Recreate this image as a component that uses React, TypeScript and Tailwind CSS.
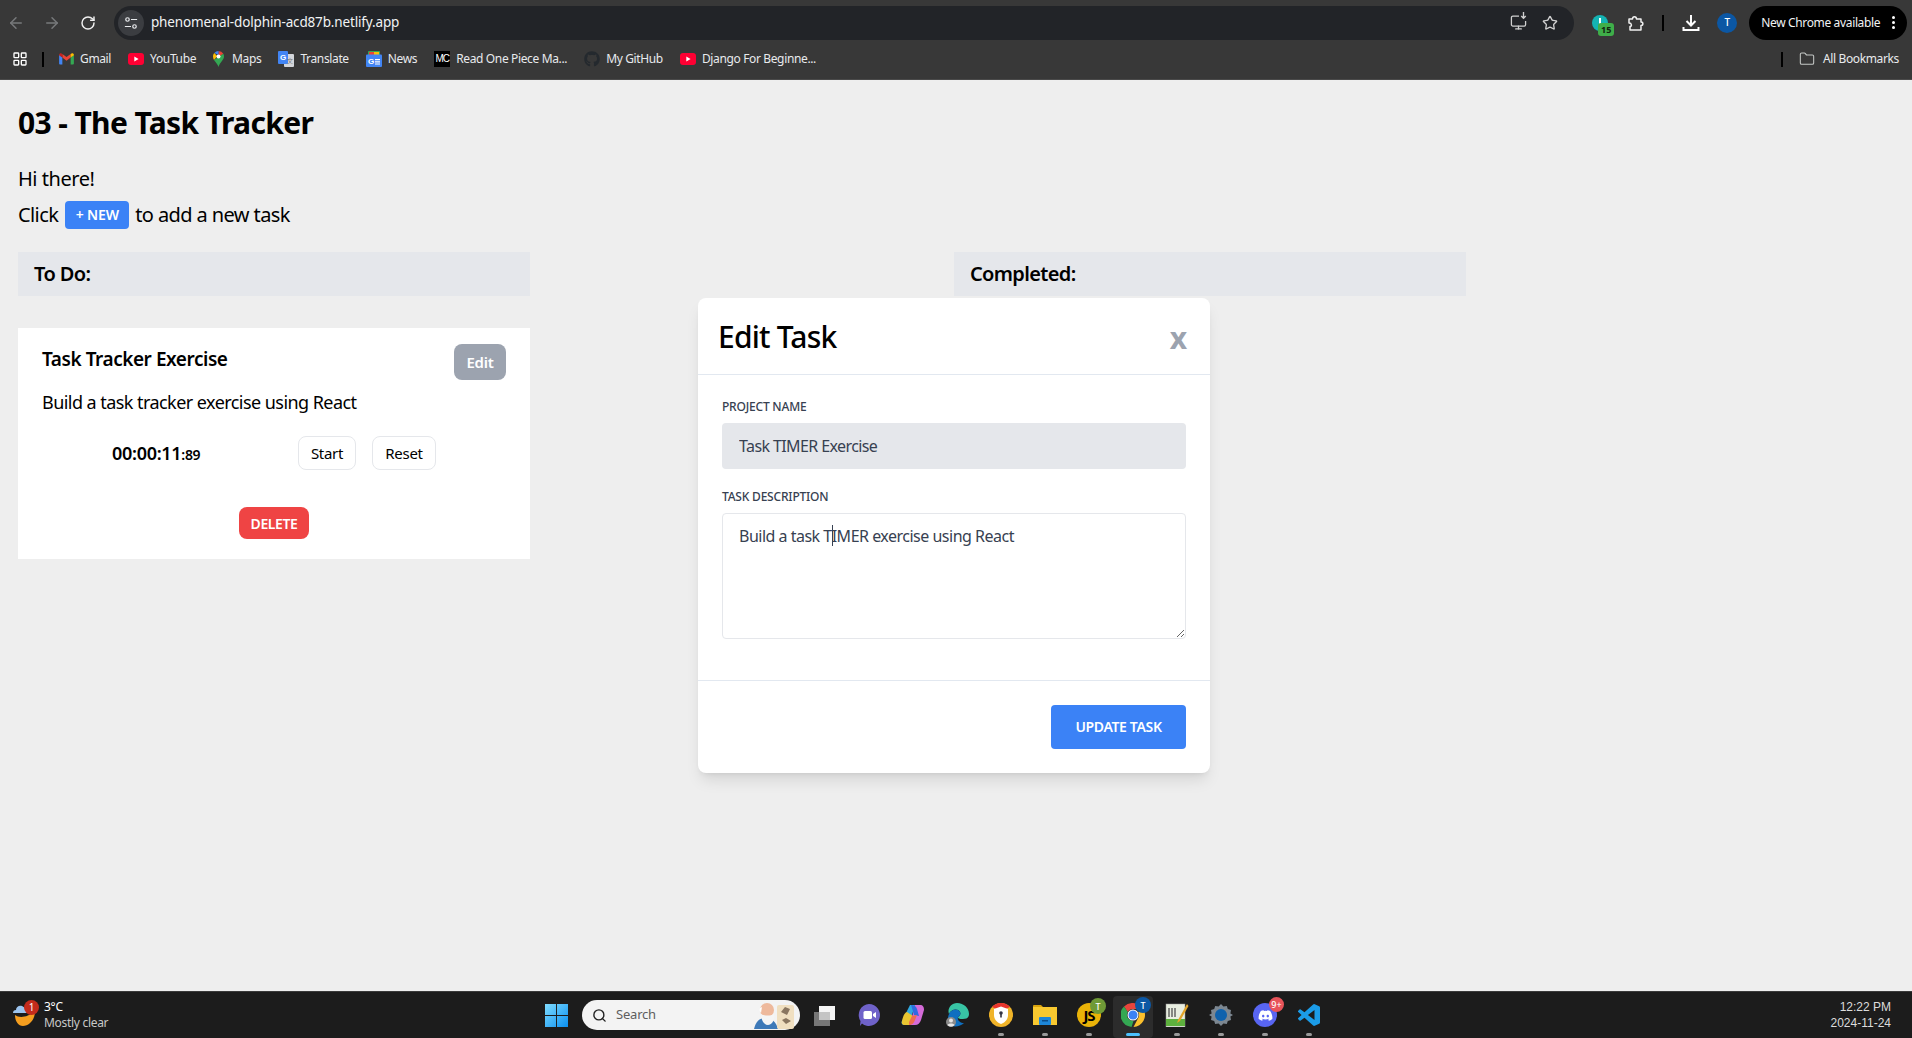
import { ArrowLeft, ArrowRight, RotateCw, Star, LayoutGrid, Folder, Search, Monitor } from "lucide-react";
import { FaGithub, FaDiscord } from "react-icons/fa";
import type { ReactNode } from "react";

const YT = () => (
  <svg viewBox="0 0 16 12" className="w-4 h-3">
    <rect width="16" height="12" rx="3" fill="#ff0033" />
    <path d="M6.3 3.6 10.6 6 6.3 8.4z" fill="#fff" />
  </svg>
);
const Gmail = () => (
  <svg viewBox="0 0 16 13" className="w-[15px] h-3">
    <path d="M0 2v9.5A1 1 0 0 0 1 12.5h2.5V5z" fill="#4285f4" />
    <path d="M16 2v9.5a1 1 0 0 1-1 1h-2.5V5z" fill="#34a853" />
    <path d="M3.5 5 8 8.4 12.5 5V1L8 4.4 3.5 1z" fill="#ea4335" />
    <path d="M0 2c0-1.6 2-2.2 3.5-1V5L0 2.4z" fill="#c5221f" />
    <path d="M16 2c0-1.6-2-2.2-3.5-1V5L16 2.4z" fill="#fbbc04" />
  </svg>
);
const MapsPin = () => (
  <svg viewBox="0 0 11 16" className="w-[11px] h-4">
    <path d="M5.5 0a5.5 5.5 0 0 1 4.8 2.8L5.5 6z" fill="#ea4335" />
    <path d="M1.3 2A5.5 5.5 0 0 1 5.5 0v4z" fill="#4285f4" />
    <path d="M0 5.5c0-1.4.5-2.6 1.3-3.5l3 3.2L1 9C.4 7.9 0 6.8 0 5.5z" fill="#fbbc04" />
    <path d="M10.3 2.8c.5.8.7 1.7.7 2.7 0 3.5-4 5.5-5.5 10.5C4.8 13.200 2.300 11 1 9z" fill="#34a853" />
    <circle cx="5.500" cy="5.500" r="2" fill="#fff" />
  </svg>
);
const Translate = () => (
  <svg viewBox="0 0 16 16" className="w-4 h-4">
    <rect x="6" y="3" width="10" height="13" rx="1" fill="#d4d6da" />
    <rect x="0" y="0" width="10" height="13" rx="1" fill="#4285f4" />
    <text x="5" y="9" fontSize="8" textAnchor="middle" fill="#fff" fontFamily="Liberation Sans, sans-serif" fontWeight="700">G</text>
    <text x="12" y="12" fontSize="6" textAnchor="middle" fill="#777" fontFamily="Noto Sans CJK SC, sans-serif">文</text>
  </svg>
);
const News = () => (
  <svg viewBox="0 0 16 16" className="w-4 h-4">
    <rect x="2" y="0" width="12" height="6" rx="1" fill="#34a853" />
    <rect x="3" y="1" width="5" height="3" fill="#ea4335" />
    <rect x="8" y="1" width="5" height="3" fill="#fbbc04" />
    <rect x="0" y="3.500" width="16" height="12.500" rx="1" fill="#4285f4" />
    <text x="5" y="13" fontSize="8" textAnchor="middle" fill="#fff" fontFamily="Liberation Sans, sans-serif" fontWeight="700">G</text>
    <path d="M9 8h5v1.200H9zM9 10.200h5v1.200H9zM9 12.400h5v1.200H9z" fill="#fff" />
  </svg>
);
const MC = () => (
  <div className="w-4 h-4 bg-black flex items-center justify-center text-white text-[10px] leading-none tracking-[-1px] font-['Liberation_Sans',sans-serif]">MC</div>
);

function Bookmark({ icon, label, gap }: { icon: ReactNode; label: string; gap: string }) {
  return (
    <div className={`flex items-center ${gap}`}>
      {icon}
      <span className="text-[12px] leading-4 text-[#e8eaed] whitespace-nowrap tracking-[-0.36px]">{label}</span>
    </div>
  );
}

const Badge = ({ text, color, cls }: { text: string; color: string; cls: string }) => (
  <div className={`absolute rounded-full flex items-center justify-center text-white font-medium leading-none ${cls}`} style={{ background: color }}>{text}</div>
);

function TaskIcon({ children, dot, active }: { children: ReactNode; dot?: boolean; active?: boolean }) {
  return (
    <div className={`relative w-[44px] h-[47px] flex items-center justify-center shrink-0`}>
      {active && <div className="absolute left-[2px] right-[2px] top-[4px] bottom-[1px] bg-[#2c2c2c] rounded-[4px]" />}
      <div className="relative w-6 h-6 flex items-center justify-center">{children}</div>
      {dot && <div className="absolute left-[19px] bottom-[3px] w-[6px] h-[3px] rounded-full bg-[#9a9a9a]" />}
      {active && <div className="absolute left-[15px] bottom-[3px] w-[14px] h-[3px] rounded-full bg-[#4cc2ff]" />}
    </div>
  );
}

export default function App() {
  return (
    <div className="h-screen w-full flex flex-col overflow-hidden bg-[#eeeeee] font-['Noto_Sans',sans-serif] text-black">
      {/* Browser toolbar */}
      <header className="h-[80px] shrink-0 bg-[#383838] border-b border-[#4a4a4a]">
        <div className="h-[44px] flex items-center pl-[6px] pr-[5px] pt-[1px]">
          <ArrowLeft className="w-[18px] h-[18px] text-[#77797b] ml-[1px]" strokeWidth={2} />
          <ArrowRight className="w-[18px] h-[18px] text-[#77797b] ml-[18px]" strokeWidth={2} />
          <RotateCw className="w-4 h-4 text-[#f0f0f0] ml-[19px]" strokeWidth={2.2} />
          <div className="ml-[18px] w-[1462px] h-[34px] rounded-full bg-[#222428] flex items-center pl-[4px]">
            <div className="w-[26px] h-[26px] rounded-full bg-[#3b3d41] flex items-center justify-center">
              <svg viewBox="0 0 16 16" className="w-[14px] h-[14px]" fill="none" stroke="#e8eaed" strokeWidth="1.400">
                <circle cx="4" cy="4" r="2" />
                <path d="M8 4h7M1 12h7" />
                <circle cx="12" cy="12" r="2" />
              </svg>
            </div>
            <span className="ml-[7px] text-[13.5px] text-[#f1f3f4] tracking-[-0.15px]">phenomenal-dolphin-acd87b.netlify.app</span>
            <div className="ml-auto flex items-center gap-[15px] mr-[16px]">
              <div className="relative w-[17px] h-[17px] flex items-center justify-center">
                <Monitor className="w-[17px] h-[17px] text-[#d0d0d0]" strokeWidth={1.800} />
                <div className="absolute -right-[1px] -top-[2px] w-[9px] h-[9px] bg-[#222428] flex items-center justify-center">
                  <svg viewBox="0 0 10 10" className="w-[9px] h-[9px]" fill="none" stroke="#d0d0d0" strokeWidth="1.500"><path d="M5 0v7M2.500 4.500 5 7l2.500-2.500" /></svg>
                </div>
              </div>
              <Star className="w-4 h-4 text-[#d0d0d0]" strokeWidth={2} />
            </div>
          </div>
          <div className="relative ml-[18px] w-[16px] h-[16px] rounded-full bg-[#14b3b3] flex items-center justify-center">
            <div className="w-[2px] h-[6px] bg-white mb-[3px]" />
            <div className="absolute left-[6px] top-[8px] w-[16px] h-[13px] rounded-[3px] bg-[#3fae49] text-[#10240f] text-[9px] font-bold leading-[13px] text-center">15</div>
          </div>
          <svg viewBox="0 0 16 16" className="ml-[20px] w-[16px] h-[16px]" fill="none" stroke="#f0f0f0" strokeWidth="1.500" strokeLinejoin="round">
            <path d="M1 4h3.500c0-3 4-3 4 0H13v3c2.500 0 2.500 3.500 0 3.500V15H2v-3.500c2 0 2-3.500-1-3.500z" />
          </svg>
          <div className="ml-[18px] w-[2px] h-[16px] bg-black" />
          <svg viewBox="0 0 18 18" className="ml-[18px] w-[18px] h-[18px]" fill="none" stroke="#ffffff" strokeWidth="2">
            <path d="M9 1v10M4.500 7 9 11.500 13.500 7M1.500 13v3h15v-3" />
          </svg>
          <div className="ml-[17px] w-5 h-5 rounded-full bg-[#0b57a4] text-white text-[10px] font-medium flex items-center justify-center">T</div>
          <div className="ml-[12px] w-[158px] h-[34px] rounded-full bg-black flex items-center pl-[12px] pr-[12px] justify-between">
            <span className="text-[12px] text-[#f1f3f4] whitespace-nowrap tracking-[-0.35px]">New Chrome available</span>
            <div className="flex flex-col gap-[2px]">
              <div className="w-[3px] h-[3px] rounded-full bg-white" />
              <div className="w-[3px] h-[3px] rounded-full bg-white" />
              <div className="w-[3px] h-[3px] rounded-full bg-white" />
            </div>
          </div>
        </div>
        <div className="h-[30px] flex items-center pl-[12px] pr-[13px]">
          <LayoutGrid className="w-4 h-4 text-white" strokeWidth={2} />
          <div className="ml-[14px] w-[2px] h-[15px] bg-black" />
          <div className="ml-[15px] flex items-center gap-[17px]">
            <Bookmark icon={<Gmail />} label="Gmail" gap="gap-[6px]" />
            <Bookmark icon={<YT />} label="YouTube" gap="gap-[6px]" />
            <Bookmark icon={<MapsPin />} label="Maps" gap="gap-[8px]" />
            <Bookmark icon={<Translate />} label="Translate" gap="gap-[6px]" />
            <Bookmark icon={<News />} label="News" gap="gap-[6px]" />
            <Bookmark icon={<MC />} label="Read One Piece Ma..." gap="gap-[6px]" />
            <Bookmark icon={<FaGithub className="w-4 h-4 text-[#24292e]" />} label="My GitHub" gap="gap-[6px]" />
            <Bookmark icon={<YT />} label="Django For Beginne..." gap="gap-[6px]" />
          </div>
          <div className="ml-auto w-[2px] h-[15px] bg-black" />
          <div className="ml-[16px] flex items-center gap-[8px]">
            <Folder className="w-4 h-4 text-[#c4c7c5]" strokeWidth={1.600} />
            <span className="text-[12px] text-[#e8eaed] whitespace-nowrap tracking-[-0.36px]">All Bookmarks</span>
          </div>
        </div>
      </header>

      {/* Page */}
      <main className="relative flex-1 pl-[18px] pt-[23px]">
        <h1 className="text-[30px] leading-10 font-bold tracking-[-0.62px]">03 - The Task Tracker</h1>
        <p className="mt-[22px] text-[20px] leading-7 tracking-[-0.45px]">Hi there!</p>
        <div className="mt-[8px] flex items-center text-[20px] leading-7 tracking-[-0.6px]">
          <span>Click</span>
          <span className="ml-[7px] w-[64px] h-[28px] rounded bg-[#3b82f6] text-white text-[14px] font-semibold flex items-center justify-center tracking-[-0.15px]">+ NEW</span>
          <span className="ml-[6px]">to add a new task</span>
        </div>

        <div className="mt-[23px] grid grid-cols-[512px_512px] gap-x-[424px] items-start">
          <section>
            <div className="h-[44px] bg-[#e5e7eb] pl-4 flex items-center text-[20px] font-semibold tracking-[-0.6px]">To Do:</div>
            <article className="mt-[32px] h-[231px] bg-white pl-6 pr-6 pt-[16px]">
              <div className="flex justify-between items-start">
                <h3 className="text-[19px] leading-[30px] font-semibold tracking-[-0.45px]">Task Tracker Exercise</h3>
                <button className="w-[52px] h-[36px] rounded-lg bg-[#9ca3af] text-white text-[15px] font-semibold tracking-[-0.3px]">Edit</button>
              </div>
              <p className="mt-[8px] text-[18px] leading-7 tracking-[-0.55px]">Build a task tracker exercise using React</p>
              <div className="mt-[20px] flex items-center">
                <div className="ml-[70px] w-[186px] font-semibold text-[18px] tracking-[-0.3px]">
                  00:00:11<span className="text-[14px]">:89</span>
                </div>
                <button className="w-[58px] h-[34px] rounded-lg border border-[#e5e7eb] text-[15px] tracking-[-0.3px]">Start</button>
                <button className="ml-4 w-[64px] h-[34px] rounded-lg border border-[#e5e7eb] text-[15px] tracking-[-0.3px]">Reset</button>
              </div>
              <div className="mt-[37px] flex justify-center">
                <button className="w-[70px] h-[32px] rounded-lg bg-[#ef4444] text-white text-[14px] font-semibold tracking-[-0.4px]">DELETE</button>
              </div>
            </article>
          </section>
          <section>
            <div className="h-[44px] bg-[#e5e7eb] pl-4 flex items-center text-[20px] font-semibold tracking-[-0.65px]">Completed:</div>
          </section>
        </div>

        {/* Modal */}
        <div className="absolute left-[698px] top-[218px] w-[512px] h-[475px] bg-white rounded-lg shadow-lg flex flex-col">
          <div className="h-[77px] shrink-0 border-b border-[#e2e8f0] flex items-center justify-between pl-[20px] pr-[23px]">
            <h2 className="text-[30px] font-medium tracking-[-0.8px]">Edit Task</h2>
            <span className="text-[30px] font-bold text-[#9ca3af] leading-none mt-[4px]">x</span>
          </div>
          <div className="h-[306px] shrink-0 border-b border-[#e2e8f0] px-6 pt-[24px]">
            <label className="block text-[12px] leading-4 font-medium text-[#374151] tracking-[-0.2px]">PROJECT NAME</label>
            <input readOnly value="Task TIMER Exercise" className="mt-[8px] w-full h-[46px] rounded bg-[#e5e7eb] pl-[17px] text-[16px] text-[#374151] tracking-[-0.6px] outline-none" />
            <label className="mt-[20px] block text-[12px] leading-4 font-medium text-[#374151] tracking-[-0.2px]">TASK DESCRIPTION</label>
            <div className="relative mt-[8px]">
              <textarea readOnly value="Build a task TIMER exercise using React" className="block w-full h-[126px] rounded border border-[#e5e7eb] pl-[16px] pt-[10px] text-[16px] leading-6 text-[#374151] tracking-[-0.5px] outline-none" />
              <div className="absolute left-[110px] top-[12px] w-px h-[21px] bg-[#374151]" />
            </div>
          </div>
          <div className="flex-1 flex justify-end items-center pr-6 pb-[1px]">
            <button className="w-[135px] h-[44px] rounded bg-[#3b82f6] text-white text-[14px] font-semibold tracking-[-0.35px]">UPDATE TASK</button>
          </div>
        </div>
      </main>

      {/* Windows taskbar */}
      <footer className="h-[47px] shrink-0 bg-[#1c1c1c] border-t border-[#3a3a3a] flex items-center relative">
        <div className="w-[543px] shrink-0 flex items-center pl-[12px]">
          <div className="relative w-[26px] h-[26px]">
            <svg viewBox="0 0 26 26" className="w-[26px] h-[26px]">
              <path d="M3 13C7 16 15 16 23 9 23 18 17 24 11 24 6 24 3 19 3 13z" fill="#f59e1f" />
              <path d="M1 11c0-2 1-3 3-3 0-3 3-5 6-4 2 1 3 2 3 3 1 0 2 2 2 4z" fill="#9cc4ee" />
            </svg>
            <div className="absolute left-[12px] -top-[2px] w-[15px] h-[15px] rounded-full bg-[#c42b1c] text-white text-[10px] leading-[15px] text-center">1</div>
          </div>
          <div className="ml-[6px] flex flex-col text-[12px] leading-4 tracking-[-0.3px]">
            <span className="text-white">3°C</span>
            <span className="text-[#c8c8c8]">Mostly clear</span>
          </div>
        </div>
        <div className="flex items-center">
          <svg viewBox="0 0 24 24" className="ml-[2px] w-[23px] h-[23px]">
            <defs>
              <linearGradient id="win" x1="0" y1="0" x2="1" y2="1">
                <stop offset="0" stopColor="#7fdcff" />
                <stop offset="1" stopColor="#0a8ff0" />
              </linearGradient>
            </defs>
            <path d="M0 0h11.500v11.500H0zM12.500 0H24v11.500H12.500zM0 12.500h11.500V24H0zM12.500 12.500H24V24H12.500z" fill="url(#win)" />
          </svg>
          <div className="ml-[14px] w-[218px] h-[30px] rounded-full bg-[#f3f3f3] flex items-center pl-[10px] relative">
            <Search className="w-[15px] h-[15px] text-[#222]" strokeWidth={2.200} />
            <span className="ml-[9px] text-[13px] text-[#5e5e5e] tracking-[-0.2px]">Search</span>
            <svg viewBox="0 0 42 28" className="absolute right-[6px] top-[1px] w-[42px] h-[28px]">
              <path d="M2 28c2-8 6-11 12-11s10 4 12 11z" fill="#3d79b8" />
              <circle cx="15" cy="9" r="7" fill="#eeb99c" />
              <path d="M9 13c0 6 3 11 7 11s7-5 6-11c-3 2-10 2-13 0z" fill="#f5f5f5" />
              <path d="M8 7c-1 2 0 4 1 5l1-6z" fill="#fff" />
              <rect x="25" y="4" width="17" height="24" rx="2" fill="#f0dfc0" />
              <path d="M29 11l4-5 5 2-3 6zM30 19l4-2 5 3-5 3z" fill="#8a7660" />
            </svg>
          </div>
          <div className="ml-[3px] flex items-center">
            <TaskIcon>
              <svg viewBox="0 0 24 24" className="w-6 h-6">
                <rect x="1" y="9" width="16" height="14" fill="#777" />
                <rect x="6" y="3" width="16" height="14" fill="#f5f5f5" />
                <rect x="6" y="9" width="11" height="8" fill="#c4c4c4" />
              </svg>
            </TaskIcon>
            <TaskIcon>
              <svg viewBox="0 0 24 24" className="w-6 h-6">
                <path d="M12 1a11 11 0 1 1-7 19.500L3 23l.5-5A11 11 0 0 1 12 1z" fill="#6f62c9" />
                <rect x="6.500" y="8" width="8.500" height="8" rx="1.500" fill="#fff" />
                <path d="M16 11l3-2v6l-3-2z" fill="#fff" />
              </svg>
            </TaskIcon>
            <TaskIcon>
              <svg viewBox="0 0 24 24" className="w-6 h-6">
                <path d="M9 2h5l-6 20H3C1 22 0 20 1 18z" fill="#30a8e0" />
                <path d="M6 9c-2 0-4 4-5 9-1 3 1 4 3 4h5l3-9z" fill="#e9c531" />
                <path d="M14 2h5c3 0 4 2 4 5l-3 10c-1 3-3 5-6 5H9z" fill="#d46bd8" />
                <path d="M10 2c3 0 5 1 6 4l2 7-5-1-2-7z" fill="#2f6be0" />
                <path d="M8 22c3 0 5-2 6-5l2-5-5 1-3 6z" fill="#ee6d4c" />
              </svg>
            </TaskIcon>
            <TaskIcon>
              <svg viewBox="0 0 24 24" className="w-6 h-6">
                <path d="M12 0c7 0 12 5 12 11 0 4-3 5-6 5-2 0-5 0-5-2 2-1 3-3 2-5-2-4-9-3-11 2C2 6 6 0 12 0z" fill="#38c4a4" />
                <path d="M4 11c2-5 9-6 11-2 1 2 0 4-2 5-1 3 2 6 6 6-3 3-8 4-12 3C3 21 2 15 4 11z" fill="#0f6fc0" />
                <circle cx="6" cy="19" r="5" fill="#8a8a8a" />
                <circle cx="6" cy="17.500" r="2" fill="#e6e6e6" />
                <path d="M2.500 22c1-2 6-2 7 0-2 2-5 2-7 0z" fill="#e6e6e6" />
              </svg>
            </TaskIcon>
            <TaskIcon dot>
              <svg viewBox="0 0 24 24" className="w-6 h-6">
                <circle cx="12" cy="12" r="12" fill="#f0b429" />
                <path d="M3 4a12 12 0 0 1 18 0l-9 4z" fill="#e8352e" />
                <path d="M12 3.500l7 2.500v6c0 5-4 8-7 9-3-1-7-4-7-9V6z" fill="#fff" />
                <circle cx="12" cy="10" r="1.800" fill="#334" />
                <rect x="11.200" y="10" width="1.600" height="4.500" fill="#334" />
              </svg>
            </TaskIcon>
            <TaskIcon dot>
              <svg viewBox="0 0 24 24" className="w-6 h-6">
                <path d="M0 3a1 1 0 0 1 1-1h7l3 3h-11z" fill="#d9a30d" />
                <rect x="0" y="4" width="24" height="18" fill="#f9c930" />
                <rect x="6" y="14" width="12" height="8" rx="1" fill="#1d86d8" />
                <rect x="9" y="17" width="6" height="1.500" fill="#0a4d8a" />
              </svg>
            </TaskIcon>
            <TaskIcon dot>
              <div className="w-6 h-6 rounded-full bg-[#eab308] text-black text-[15px] font-bold flex items-center justify-center leading-none tracking-[-1px]">JS</div>
              <Badge text="T" color="#6f9a37" cls="-right-[5px] -top-[5px] w-4 h-4 text-[9px]" />
            </TaskIcon>
            <TaskIcon active>
              <svg viewBox="0 0 24 24" className="w-6 h-6">
                <path d="M12 0a12 12 0 0 1 10.400 6H12a6 6 0 0 0-5.200 3L3 3.500A12 12 0 0 1 12 0z" fill="#e8453c" />
                <path d="M22.400 6a12 12 0 0 1-9.900 18l4.700-9a6 6 0 0 0 0-6z" fill="#fbc02d" />
                <path d="M3 3.500 6.800 9a6 6 0 0 0 5.700 9l-2 5.900A12 12 0 0 1 3 3.500z" fill="#34a853" />
                <circle cx="12" cy="12" r="5.500" fill="#fff" />
                <circle cx="12" cy="12" r="4.500" fill="#3b82f6" />
              </svg>
              <Badge text="T" color="#0b57a4" cls="-right-[6px] -top-[6px] w-4 h-4 text-[9px]" />
            </TaskIcon>
            <TaskIcon dot>
              <svg viewBox="0 0 24 24" className="w-6 h-6">
                <rect x="1" y="1" width="19" height="23" fill="#e8eee0" stroke="#999" strokeWidth="0.500" />
                <rect x="1" y="16" width="19" height="7" fill="#5eb13e" />
                <path d="M4 5v9M7 5v9M10 5v9" stroke="#444" strokeWidth="1.200" />
                <path d="M22 1 13 17l-1 3 3-2L23.500 3z" fill="#e3a52a" />
              </svg>
            </TaskIcon>
            <TaskIcon dot>
              <svg viewBox="0 0 24 24" className="w-6 h-6">
                <path d="M12 1l2.400 2.500 3.400-.6 1 3.200 3.200 1-.6 3.400L24 12l-2.600 1.500.6 3.400-3.200 1-1 3.200-3.400-.6L12 23l-2.400-2.500-3.400.6-1-3.200-3.200-1 .6-3.400L0 12l2.600-1.500L2 7.100l3.200-1 1-3.200 3.400.6z" fill="#7c8791" />
                <circle cx="12" cy="12" r="6" fill="#0f62ad" />
              </svg>
            </TaskIcon>
            <TaskIcon dot>
              <div className="w-6 h-6 rounded-full bg-[#5865f2] flex items-center justify-center">
                <FaDiscord className="w-[15px] h-[15px] text-white" />
              </div>
              <Badge text="9+" color="#e8545a" cls="-right-[7px] -top-[6px] w-[15px] h-[15px] text-[9px]" />
            </TaskIcon>
            <TaskIcon dot>
              <svg viewBox="0 0 24 24" className="w-[22px] h-[22px]">
                <path d="M23.150 2.587 18.210.21a1.494 1.494 0 0 0-1.705.29l-9.460 8.630-4.120-3.128a.999.999 0 0 0-1.276.057L.327 7.261A1 1 0 0 0 .326 8.740L3.899 12 .326 15.260a1 1 0 0 0 .001 1.479L1.650 17.940a.999.999 0 0 0 1.276.057l4.120-3.128 9.460 8.630a1.492 1.492 0 0 0 1.704.29l4.942-2.377A1.500 1.500 0 0 0 24 20.060V3.939a1.500 1.500 0 0 0-.850-1.352zm-5.146 14.861L10.826 12l7.178-5.448v10.896z" fill="#1b9ce8" />
              </svg>
            </TaskIcon>
          </div>
        </div>
        <div className="ml-auto pr-[21px] text-right text-[12px] leading-4 text-[#dcdcdc] font-['Liberation_Sans',sans-serif]">
          <div>12:22 PM</div>
          <div>2024-11-24</div>
        </div>
      </footer>
    </div>
  );
}
